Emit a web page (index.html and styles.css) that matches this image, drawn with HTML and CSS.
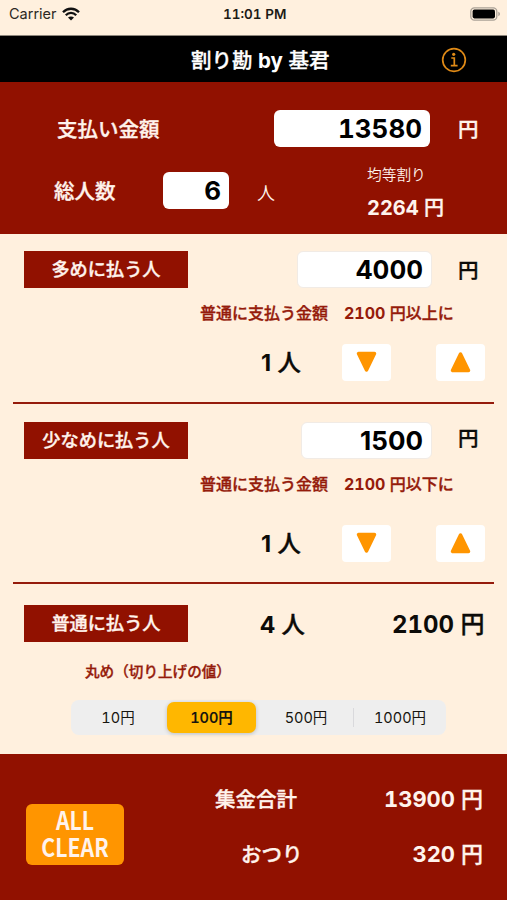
FILE: index.html
```html
<!DOCTYPE html>
<html lang="ja">
<head>
<meta charset="utf-8">
<title>割り勘 by 基君</title>
<link rel="stylesheet" href="styles.css">
</head>
<body>
<div class="status">
  <span class="carrier">Carrier</span>
  <svg class="wifi" width="18" height="14" viewBox="0 0 18 14"><g fill="none" stroke="#111" stroke-width="2.3"><path d="M1 5.2C5.4.6 12.600.6 17 5.200"/><path d="M3.800 8.200C6.700 5.200 11.300 5.200 14.200 8.200"/></g><path fill="#111" d="M9 13.600 6 10.500C7.800 9 10.200 9 12 10.500Z"/></svg>
  <span class="clock">11:01 PM</span>
  <svg class="battery" width="31" height="14" viewBox="0 0 31 14"><rect x=".8" y=".8" width="26" height="12.400" rx="3.600" fill="none" stroke="#aaa196" stroke-width="1.300"/><rect x="2.600" y="2.600" width="22.400" height="8.800" rx="1.800" fill="#000"/><path d="M28.300 4.800C30.500 5.500 30.500 8.500 28.300 9.200Z" fill="#aaa196"/></svg>
</div>
<header class="nav">
  <h1 class="title">割り勘 <b>by</b> 基君</h1>
  <svg class="info" width="26" height="26" viewBox="0 0 26 26"><circle cx="13" cy="13" r="11.300" fill="none" stroke="#e08a16" stroke-width="1.700"/><circle cx="12.700" cy="7.300" r="1.600" fill="#e08a16"/><path d="M10.300 11h3v7.600M9.800 18.700h6.800" fill="none" stroke="#e08a16" stroke-width="1.700"/></svg>
</header>
<section class="total">
  <div class="row total-row">
    <span class="caption">支払い金額</span>
    <span class="field amount">13580</span>
    <span class="unit">円</span>
  </div>
  <div class="row people-row">
    <span class="caption people">総人数</span>
    <span class="field count">6</span>
    <span class="person">人</span>
    <div class="equal"><span class="equal-label">均等割り</span><span class="equal-value"><b>2264</b> 円</span></div>
  </div>
</section>
<main class="groups">
  <section class="group more">
    <div class="row entry">
      <span class="tag">多めに払う人</span>
      <span class="field">4000</span>
      <span class="unit">円</span>
    </div>
    <p class="hint">普通に支払う金額　<b>2100</b> 円以上に</p>
    <div class="row stepper">
      <span class="num"><b>1</b> 人</span>
      <span class="step"><svg width="22" height="22" viewBox="0 0 22 22"><path class="tri" d="M2.500 2.500h16L10.500 19Z"/></svg></span>
      <span class="step"><svg width="22" height="22" viewBox="0 0 22 22"><path class="tri" d="M2.500 19.500h16L10.500 3Z"/></svg></span>
    </div>
  </section>
  <section class="group less">
    <div class="row entry">
      <span class="tag">少なめに払う人</span>
      <span class="field">1500</span>
      <span class="unit">円</span>
    </div>
    <p class="hint">普通に支払う金額　<b>2100</b> 円以下に</p>
    <div class="row stepper">
      <span class="num"><b>1</b> 人</span>
      <span class="step"><svg width="22" height="22" viewBox="0 0 22 22"><path class="tri" d="M2.500 2.500h16L10.500 19Z"/></svg></span>
      <span class="step"><svg width="22" height="22" viewBox="0 0 22 22"><path class="tri" d="M2.500 19.500h16L10.500 3Z"/></svg></span>
    </div>
  </section>
  <section class="normal">
    <div class="row normal-row">
      <span class="tag">普通に払う人</span>
      <span class="num"><b>4</b> 人</span>
      <span class="price"><b>2100</b> 円</span>
    </div>
    <p class="round">丸め（切り上げの値）</p>
    <div class="segments">
      <span class="seg">10円</span><span class="seg on">100円</span><span class="seg">500円</span><span class="seg divided">1000円</span>
    </div>
  </section>
</main>
<footer class="summary">
  <div class="clear"><span class="clear-text">ALL<br>CLEAR</span></div>
  <div class="results">
    <div class="result"><span>集金合計</span><span class="value"><b>13900</b> 円</span></div>
    <div class="result change"><span>おつり</span><span class="value"><b>320</b> 円</span></div>
  </div>
</footer>
</body>
</html>
```
FILE: styles.css
```css
* { box-sizing: border-box; margin: 0; padding: 0; }
body {
  width: 507px; height: 900px; overflow: hidden;
  display: flex; flex-direction: column;
  background: #fff0de; color: #0c0b08;
  font-family: Inter, "Noto Sans CJK JP", sans-serif;
  font-weight: 500; white-space: nowrap;
  font-variant-numeric: tabular-nums;
  -webkit-text-stroke: .35px;
}
b { font-weight: 650; }
b, .status, .field, .person, .equal-label, .segments, .clear { -webkit-text-stroke: 0; }
svg { display: block; flex: none; }
.row { display: flex; align-items: center; }

.status { height: 36px; padding: 0 6px 8px 9px; display: grid; grid-template-columns: 53px 161px 1fr 31px; align-items: center; border-bottom: 1px solid #8d867c; font-size: 13.500px; color: #2b2823; }
.carrier { font-weight: 400; font-size: 14.5px; }
.clock { color: #1c1a16; font-weight: 600; }

.nav { height: 46px; background: #000; color: #fff; display: flex; align-items: center; padding: 3px 40px 0 191px; justify-content: space-between; }
.title { font-size: 20.5px; font-weight: 500; line-height: 30px; }
.info { margin-top: -2px; }

.total { height: 151.500px; background: #911100; color: #fff3ec; padding-top: 28px; }
.field { background: #fff; color: #000; border-radius: 6px; height: 37px; line-height: 38px; font-size: 26px; font-weight: 650; text-align: right; padding-right: 8px; flex: none; }
.caption { width: 217px; font-size: 20.5px; margin-top: -2px; }
.total-row { padding-left: 57px; height: 37px; }
.amount { width: 156px; }
.unit { font-size: 20.500px; margin-left: 28px; margin-top: -1px; }
.people-row { padding-left: 54px; height: 60px; margin-top: 13px; }
.caption.people { width: 109px; margin-top: 0; }
.count { width: 66px; }
.person { width: 110px; margin-left: 28px; font-size: 18px; font-weight: 350; margin-top: 3px; }
.equal { display: flex; flex-direction: column; gap: 7px; margin-top: 6px; }
.equal-label { font-size: 14.700px; line-height: 22px; font-weight: 350; }
.equal-value { font-size: 20px; line-height: 30px; }

.groups { height: 520px; }
.group { margin: 0 13px; border-bottom: 2px solid #951b0b; }
.tag { width: 164px; height: 37px; line-height: 36px; text-align: center; background: #911100; color: #fff3ec; font-size: 18.200px; flex: none; }
.entry { padding-left: 11px; height: 37px; }
.entry .field { width: 135px; margin-left: 109px; border: 1px solid #f1ebe5; line-height: 36px; }
.less .entry .field { width: 131px; margin-left: 113px; font-variant-numeric: normal; }
.entry .unit { margin-left: 26px; }
.less .entry .unit { margin-top: -6px; }
.more { height: 170px; padding-top: 17px; }
.less { height: 180.500px; padding-top: 18px; }
.hint { margin: 12px 0 0 187px; height: 26px; line-height: 27px; font-size: 16px; color: #951b0b; }
.stepper { margin-top: 18px; padding-left: 248px; height: 37px; }
.less .stepper { margin-top: 28px; }
.num { width: 81px; font-size: 23.500px; margin-top: -3px; }
.stepper .num { font-variant-numeric: normal; }
.step { width: 49px; height: 37px; background: #fff; border-radius: 4px; display: grid; place-items: center; flex: none; }
.step + .step { margin-left: 45px; }
.tri { fill: #ff9500; stroke: #ff9500; stroke-width: 3.500; stroke-linejoin: round; }

.normal-row { margin-top: 20.500px; padding-left: 24px; height: 37px; }
.normal-row .num { margin-left: 72px; width: 132px; margin-top: -1px; }
.price { font-size: 24px; margin-top: -2px; }
.round { margin: 19px 0 0 85px; line-height: 22px; font-size: 14.600px; color: #951b0b; }
.segments { margin: 17px 0 0 71px; width: 375px; height: 35px; background: #eee; border-radius: 8px; display: grid; grid-template-columns: 94px 94px 94px 93px; font-size: 14.500px; }
.seg { font-weight: 400; text-align: center; line-height: 35px; color: #16150f; }
.seg.on { background: #ffb700; font-weight: 600; border-radius: 7px; margin: 2px 3px 2px 2px; line-height: 31px; box-shadow: 0 1px 4px #0003; }
.seg.divided { border-left: 1px solid #d9d9dc; margin: 8px 0; line-height: 19px; }

.summary { flex: 1; background: #911100; color: #fff3ec; padding: 29px 24px 0 26px; display: flex; }
.clear { width: 98px; height: 61px; margin-top: 21px; padding-top: 2px; border-radius: 6px; background: #ff9500; text-align: center; font: 700 25px/27px "Noto Sans CJK JP", sans-serif; }
.clear-text { display: block; transform: scaleX(.85); }
.results { flex: 1; margin-left: 91px; }
.result { height: 30px; display: flex; align-items: center; justify-content: space-between; font-size: 20.500px; }
.value { font-size: 22px; margin-top: -2px; }
.change { margin-top: 25px; padding-left: 26px; }
```
